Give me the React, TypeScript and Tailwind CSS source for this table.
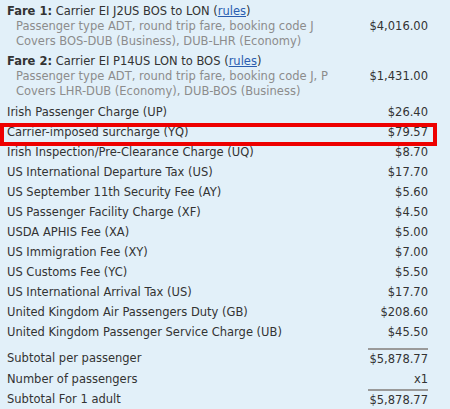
import React from 'react';

type Fee = { label: string; amount: string; flagged?: boolean };

const fees: Fee[] = [
  { label: 'Irish Passenger Charge (UP)', amount: '$26.40' },
  { label: 'Carrier-imposed surcharge (YQ)', amount: '$79.57', flagged: true },
  { label: 'Irish Inspection/Pre-Clearance Charge (UQ)', amount: '$8.70' },
  { label: 'US International Departure Tax (US)', amount: '$17.70' },
  { label: 'US September 11th Security Fee (AY)', amount: '$5.60' },
  { label: 'US Passenger Facility Charge (XF)', amount: '$4.50' },
  { label: 'USDA APHIS Fee (XA)', amount: '$5.00' },
  { label: 'US Immigration Fee (XY)', amount: '$7.00' },
  { label: 'US Customs Fee (YC)', amount: '$5.50' },
  { label: 'US International Arrival Tax (US)', amount: '$17.70' },
  { label: 'United Kingdom Air Passengers Duty (GB)', amount: '$208.60' },
  { label: 'United Kingdom Passenger Service Charge (UB)', amount: '$45.50' },
];

const fares = [
  {
    title: 'Fare 1:',
    carrier: 'Carrier EI J2US BOS to LON',
    lines: ['Passenger type ADT, round trip fare, booking code J', 'Covers BOS-DUB (Business), DUB-LHR (Economy)'],
    amount: '$4,016.00',
  },
  {
    title: 'Fare 2:',
    carrier: 'Carrier EI P14US LON to BOS',
    lines: ['Passenger type ADT, round trip fare, booking code J, P', 'Covers LHR-DUB (Economy), DUB-BOS (Business)'],
    amount: '$1,431.00',
  },
];

export default function App() {
  return (
    <div
      className="w-[450px] h-[409px] overflow-hidden bg-[#e2f0f9] pl-[7px] pr-[22px] pt-[4px] text-[11.5px] text-[#333]"
      style={{ fontFamily: '"DejaVu Sans", Verdana, sans-serif' }}
    >
      {/* 運賃ブロック */}
      {fares.map((f, i) => (
        <div key={f.title} className={`flex items-center justify-between leading-[15px] ${i > 0 ? 'mt-[5px]' : ''}`}>
          <div className="whitespace-nowrap">
            <div>
              <span className="font-bold">{f.title}</span> {f.carrier} (
              <span className="text-[#2a5db0] underline">rules</span>)
            </div>
            {f.lines.map((l) => (
              <div key={l} className="pl-[9px] text-[#8c8c8c]">
                {l}
              </div>
            ))}
          </div>
          <div>{f.amount}</div>
        </div>
      ))}

      {/* 税金・手数料 */}
      <div className="mt-[4px]">
        {fees.map((fee) => (
          <div key={fee.label} className="relative flex h-[20px] items-center justify-between whitespace-nowrap">
            <span>{fee.label}</span>
            <span>{fee.amount}</span>
            {fee.flagged && (
              <div className="absolute left-[-7px] top-[0px] h-[23px] w-[437px] border-4 border-[#ee0000]" />
            )}
          </div>
        ))}
      </div>

      {/* 小計 */}
      <div className="mt-[5px] flex h-[22px]">
        <div className="flex flex-1 items-center">Subtotal per passenger</div>
        <div className="flex w-[60px] items-center justify-end border-t-2 border-[#9a9a9a]">$5,878.77</div>
      </div>
      <div className="flex h-[19px] items-center justify-between">
        <span>Number of passengers</span>
        <span>x1</span>
      </div>
      <div className="flex h-[21px]">
        <div className="flex flex-1 items-center">Subtotal For 1 adult</div>
        <div className="flex w-[60px] items-center justify-end border-t-2 border-[#9a9a9a]">$5,878.77</div>
      </div>
    </div>
  );
}
